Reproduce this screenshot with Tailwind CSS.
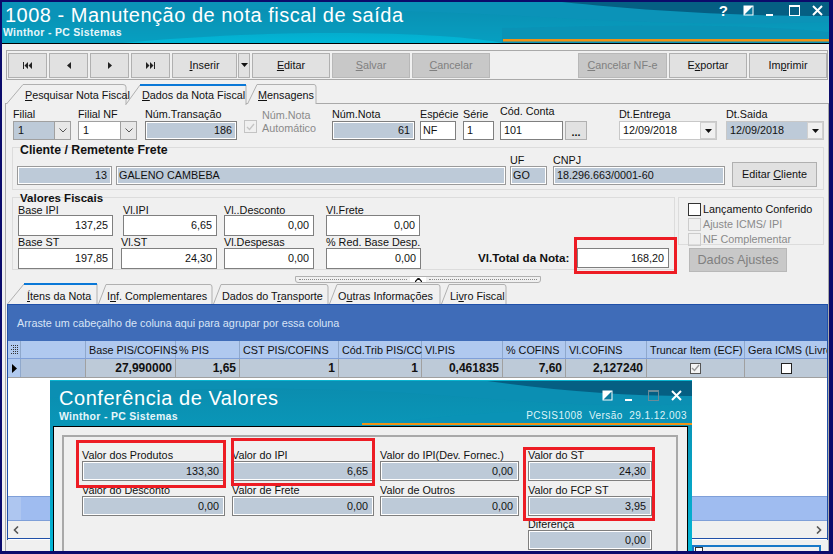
<!DOCTYPE html>
<html lang="en">
<head>
<meta charset="UTF-8">
<title>1008 - Manutenção de nota fiscal de saída</title>
<script src="https://cdn.jsdelivr.net/npm/@tailwindcss/browser@4"></script>
</head>
<body class="m-0">
<div class="relative w-[833px] h-[554px] overflow-hidden bg-[#0b0b6b] pt-[2px] pl-[2px] pr-[4px] font-['Liberation_Sans',sans-serif] text-[10.800px] leading-[13px] text-[#111]">

  <!-- main title bar -->
  <div class="relative h-[41px] bg-gradient-to-b from-[#0b8bad] to-[#01b8d8] overflow-hidden">
    <svg class="absolute inset-0" width="827" height="41" viewBox="0 0 827 41">
      <path d="M0 0H827V41H500C460 32 300 24 120 41H0Z" fill="#0a8fb3" opacity=".6"/>
      <path d="M0 18C150 6 330 4 520 14C620 20 720 24 827 20V0H0Z" fill="#0b93b8"/>
      <path d="M560 0C640 8 720 14 827 14V0Z" fill="#055f83"/>
      <path d="M500 41V26C600 24 720 20 827 30V41Z" fill="#0a93b6"/>
      <path d="M501 37H827V39.500H501Z" fill="#ef9215"/>
    </svg>
    <div class="relative pl-[3px] pt-[1px] text-[20px] leading-[24px] tracking-[0.5px] text-white">1008 - Manutenção de nota fiscal de saída</div>
    <div class="relative pl-[1px] font-bold text-[10.500px] leading-[10px] tracking-[0.3px] text-[#e6f6fa]">Winthor - PC Sistemas</div>
    <div class="absolute right-[6px] top-[3px] flex items-center text-white">
      <span class="font-bold text-[15px] leading-[11px]">?</span>
      <svg width="11" height="11" viewBox="0 0 11 11" class="ml-[15px]"><rect x=".5" y=".5" width="10" height="10" fill="#fff"/><path d="M9.500 1.500V9.500H1.500Z" fill="#0a7a9e"/></svg>
      <svg width="7" height="11" viewBox="0 0 7 11" class="ml-[12px]"><rect x="0" y="9" width="7" height="2" fill="#fff"/></svg>
      <svg width="11" height="11" viewBox="0 0 11 11" class="ml-[16px]"><rect x=".5" y="1" width="10" height="9.500" fill="none" stroke="#fff"/><rect x="0" y="0" width="11" height="2" fill="#fff"/></svg>
      <svg width="11" height="11" viewBox="0 0 11 11" class="ml-[12px]"><path d="M1 1L10 10M10 1L1 10" stroke="#fff" stroke-width="2"/></svg>
    </div>
  </div>
  <div class="h-[1px] bg-black"></div>

  <div class="relative h-[507px] overflow-hidden bg-[#f0f0f0]">
    <!-- toolbar -->
    <div class="mt-[6px]">
      <div class="ml-[4px] w-[822px] h-[30px] border border-[#a9a9a9] flex items-center pl-[1px]">
        <button class="w-[39px] h-[25px] flex items-center justify-center bg-[#e1e1e1] border border-[#b0b0b0]"><svg width="9" height="7" viewBox="0 0 9 7"><path d="M0 0H1V7H0ZM5 0V7L1.500 3.500ZM9 0V7L5.500 3.500Z" fill="#222"/></svg></button>
        <button class="ml-[2px] w-[39px] h-[25px] flex items-center justify-center bg-[#e1e1e1] border border-[#b0b0b0]"><svg width="4" height="7" viewBox="0 0 4 7"><path d="M4 0V7L0 3.500Z" fill="#222"/></svg></button>
        <button class="ml-[2px] w-[39px] h-[25px] flex items-center justify-center bg-[#e1e1e1] border border-[#b0b0b0]"><svg width="4" height="7" viewBox="0 0 4 7"><path d="M0 0V7L4 3.500Z" fill="#222"/></svg></button>
        <button class="ml-[2px] w-[39px] h-[25px] flex items-center justify-center bg-[#e1e1e1] border border-[#b0b0b0]"><svg width="9" height="7" viewBox="0 0 9 7"><path d="M0 0V7L3.500 3.500ZM4 0V7L7.500 3.500ZM8 0H9V7H8Z" fill="#222"/></svg></button>
        <button class="ml-[2px] w-[65px] h-[25px] bg-[#e1e1e1] border border-[#b0b0b0]"><u>I</u>nserir</button>
        <button class="ml-[1px] w-[12px] h-[25px] flex items-center justify-center bg-[#e1e1e1] border border-[#b0b0b0]"><svg width="7" height="4" viewBox="0 0 7 4"><path d="M0 0H7L3.500 4Z" fill="#111"/></svg></button>
        <button class="ml-[2px] w-[78px] h-[25px] bg-[#e1e1e1] border border-[#b0b0b0]"><u>E</u>ditar</button>
        <button class="ml-[2px] w-[78px] h-[25px] bg-[#c8c8c8] border border-[#b8b8b8] text-[#808080]"><u>S</u>alvar</button>
        <button class="ml-[2px] w-[78px] h-[25px] bg-[#c8c8c8] border border-[#b8b8b8] text-[#808080]"><u>C</u>ancelar</button>
        <button class="ml-[88px] w-[89px] h-[25px] bg-[#c8c8c8] border border-[#b8b8b8] text-[#808080]"><u>C</u>ancelar NF-e</button>
        <button class="ml-[2px] w-[78px] h-[25px] bg-[#e1e1e1] border border-[#b0b0b0]">E<u>x</u>portar</button>
        <button class="ml-[2px] w-[78px] h-[25px] bg-[#e1e1e1] border border-[#b0b0b0]">Im<u>p</u>rimir</button>
      </div>
    </div>

    <!-- page tabs -->
    <div class="mt-[4px] ml-[4px] h-[19px] flex whitespace-nowrap">
      <div class="relative w-[121px] h-[20px]">
        <svg class="absolute inset-0" width="121" height="20"><path d="M.5 20L17 .5H117Q120 .5 120 3V20" fill="#f0f0f0" stroke="#b0b0b0"/></svg>
        <div class="relative pl-[19px] pt-[5px]"><u>P</u>esquisar Nota Fiscal</div>
      </div>
      <div class="relative -ml-[2px] w-[122px] h-[21px] z-10">
        <svg class="absolute inset-0" width="122" height="21"><path d="M.5 21L15 1H121V21" fill="#f0f0f0" stroke="#b0b0b0"/><rect x="15" y="0" width="106" height="2" fill="#0a78d7"/></svg>
        <div class="relative pl-[17px] pt-[5px]"><u>D</u>ados da Nota Fiscal</div>
      </div>
      <div class="relative w-[70px] h-[20px]">
        <svg class="absolute inset-0" width="70" height="20"><path d="M.5 20L10 .5H67Q69 .5 69 3V20" fill="#f0f0f0" stroke="#b0b0b0"/></svg>
        <div class="relative pl-[11px] pt-[5px]"><u>M</u>ensagens</div>
      </div>
    </div>

    <!-- page panel -->
    <div class="ml-[3px] w-[824px] h-[449px] border border-[#a9a9a9] bg-[#f0f0f0]">
      <div class="flex pl-[7px] pt-[4px] h-[36px]">
        <div class="w-[58px]">
          <div class="h-[13px]">Filial</div>
          <div class="h-[19px] flex items-center bg-[#bdcad8] border border-[#a0a0a0] pl-[4px]"><span class="flex-1">1</span><span class="w-[16px] h-[17px] bg-[#e8e8e8] border-l border-[#a0a0a0] flex items-center justify-center"><svg width="8" height="5" viewBox="0 0 8 5"><path d="M.5.500L4 4L7.500.500" fill="none" stroke="#555"/></svg></span></div>
        </div>
        <div class="ml-[7px] w-[59px]">
          <div class="h-[13px]">Filial NF</div>
          <div class="h-[19px] flex items-center bg-white border border-[#a0a0a0] pl-[4px]"><span class="flex-1">1</span><span class="w-[16px] h-[17px] bg-[#e8e8e8] border-l border-[#a0a0a0] flex items-center justify-center"><svg width="8" height="5" viewBox="0 0 8 5"><path d="M.5.500L4 4L7.500.500" fill="none" stroke="#555"/></svg></span></div>
        </div>
        <div class="ml-[8px] w-[92px]">
          <div class="h-[13px]">Núm.Transação</div>
          <div class="h-[19px] flex items-center justify-end pr-[4px] bg-[#bdcad8] border border-[#7f7f7f] shadow-[inset_0_0_0_1px_#fff]">186</div>
        </div>
        <div class="ml-[7px] w-[88px] flex items-start pt-[1px]">
          <span class="mt-[11px] w-[13px] h-[13px] border border-[#c4c4c4] flex items-center justify-center shrink-0"><svg width="9" height="8" viewBox="0 0 9 8"><path d="M1 4L3.500 6.500L8 1" fill="none" stroke="#c4c4c4" stroke-width="1.300"/></svg></span>
          <span class="ml-[5px] text-[#8a8a8a]">Núm.Nota<br>Automático</span>
        </div>
        <div class="w-[83px]">
          <div class="h-[13px]">Núm.Nota</div>
          <div class="h-[19px] flex items-center justify-end pr-[4px] bg-[#bdcad8] border border-[#7f7f7f] shadow-[inset_0_0_0_1px_#fff]">61</div>
        </div>
        <div class="ml-[5px] w-[36px]">
          <div class="h-[13px] whitespace-nowrap">Espécie</div>
          <div class="h-[19px] flex items-center pl-[2px] bg-white border border-[#7f7f7f]">NF</div>
        </div>
        <div class="ml-[7px] w-[31px]">
          <div class="h-[13px]">Série</div>
          <div class="h-[19px] flex items-center pl-[3px] bg-white border border-[#7f7f7f]">1</div>
        </div>
        <div class="ml-[6px] w-[63px] -mt-[3px]">
          <div class="h-[16px] whitespace-nowrap">Cód. Conta</div>
          <div class="h-[19px] flex items-center pl-[3px] bg-white border border-[#7f7f7f]">101</div>
        </div>
        <button class="ml-[2px] mt-[13px] w-[22px] h-[19px] bg-[#e1e1e1] border border-[#b0b0b0] font-bold leading-[20px]">...</button>
        <div class="ml-[32px] w-[98px]">
          <div class="h-[13px]">Dt.Entrega</div>
          <div class="h-[19px] flex items-center bg-white border border-[#c8c8c8] pl-[3px]"><span class="flex-1">12/09/2018</span><span class="w-[16px] h-[17px] bg-[#f0f0f0] border border-[#d0d0d0] flex items-center justify-center"><svg width="7" height="4" viewBox="0 0 7 4"><path d="M0 0H7L3.500 4Z" fill="#111"/></svg></span></div>
        </div>
        <div class="ml-[9px] w-[98px]">
          <div class="h-[13px]">Dt.Saida</div>
          <div class="h-[19px] flex items-center bg-white border border-[#c8c8c8]"><span class="flex-1 h-[17px] pl-[3px] bg-[#bdcad8] leading-[17px]">12/09/2018</span><span class="w-[16px] h-[17px] bg-[#f0f0f0] border border-[#d0d0d0] flex items-center justify-center"><svg width="7" height="4" viewBox="0 0 7 4"><path d="M0 0H7L3.500 4Z" fill="#111"/></svg></span></div>
        </div>
      </div>

      <!-- cliente -->
      <div class="ml-[6px] mt-[7px] w-[812px] h-[43px] border border-[#dcdcdc]">
        <div class="ml-[7px] -mt-[4px] h-[14px] font-bold text-[12.300px]">Cliente / Remetente Frete</div>
        <div class="-mt-[3px] ml-[4px] flex items-end">
          <div class="w-[95px] h-[19px] flex items-center justify-end pr-[4px] bg-[#bdcad8] border border-[#9a9a9a] shadow-[inset_0_0_0_1px_#fff]">13</div>
          <div class="ml-[4px] w-[390px] h-[19px] flex items-center pl-[2px] bg-[#bdcad8] border border-[#9a9a9a] shadow-[inset_0_0_0_1px_#fff]">GALENO CAMBEBA</div>
          <div class="ml-[4px] w-[37px]">
            <div class="h-[11px] leading-[11px]">UF</div>
            <div class="h-[19px] flex items-center pl-[2px] bg-[#bdcad8] border border-[#9a9a9a] shadow-[inset_0_0_0_1px_#fff]">GO</div>
          </div>
          <div class="ml-[6px] w-[172px]">
            <div class="h-[11px] leading-[11px]">CNPJ</div>
            <div class="h-[19px] flex items-center pl-[3px] bg-[#bdcad8] border border-[#9a9a9a] shadow-[inset_0_0_0_1px_#fff]">18.296.663/0001-60</div>
          </div>
          <button class="ml-[7px] -mb-[2px] w-[85px] h-[25px] bg-[#e1e1e1] border border-[#b0b0b0]">Editar <u>C</u>liente</button>
        </div>
      </div>

      <!-- valores fiscais + right side -->
      <div class="ml-[6px] mt-[7px] h-[75px] flex">
        <div class="w-[663px] h-[73px] border border-[#dcdcdc]">
          <div class="ml-[7px] -mt-[6px] h-[13px] font-bold text-[11.500px]">Valores Fiscais</div>
          <div class="ml-[5px] flex h-[31px]">
            <div class="w-[95px]"><div class="h-[10px] leading-[10px]">Base IPI</div><div class="h-[21px] flex items-center justify-end pr-[4px] bg-white border border-[#7f7f7f]">137,25</div></div>
            <div class="ml-[10px] w-[94px]"><div class="h-[10px] leading-[10px]">Vl.IPI</div><div class="h-[21px] flex items-center justify-end pr-[4px] bg-white border border-[#7f7f7f]">6,65</div></div>
            <div class="ml-[7px] w-[90px]"><div class="h-[10px] leading-[10px]">Vl..Desconto</div><div class="h-[21px] flex items-center justify-end pr-[4px] bg-white border border-[#7f7f7f]">0,00</div></div>
            <div class="ml-[12px] w-[94px]"><div class="h-[10px] leading-[10px]">Vl.Frete</div><div class="h-[21px] flex items-center justify-end pr-[4px] bg-white border border-[#7f7f7f]">0,00</div></div>
          </div>
          <div class="ml-[5px] mt-[1px] flex">
            <div class="w-[95px]"><div class="h-[11px] leading-[11px]">Base ST</div><div class="h-[21px] flex items-center justify-end pr-[4px] bg-white border border-[#7f7f7f]">197,85</div></div>
            <div class="ml-[8px] w-[96px]"><div class="h-[11px] leading-[11px]">Vl.ST</div><div class="h-[21px] flex items-center justify-end pr-[4px] bg-white border border-[#7f7f7f]">24,30</div></div>
            <div class="ml-[7px] w-[90px]"><div class="h-[11px] leading-[11px]">Vl.Despesas</div><div class="h-[21px] flex items-center justify-end pr-[4px] bg-white border border-[#7f7f7f]">0,00</div></div>
            <div class="ml-[12px] w-[95px]"><div class="h-[11px] leading-[11px] whitespace-nowrap">% Red. Base Desp.</div><div class="h-[21px] flex items-center justify-end pr-[4px] bg-white border border-[#7f7f7f]">0,00</div></div>
            <div class="ml-[57px] self-end mb-[1px] h-[20px] leading-[20px] font-bold text-[11.700px] whitespace-nowrap w-[99px]">Vl.Total da Nota:</div>
            <div class="self-end mb-[1px] w-[92px] h-[20px] flex items-center justify-end pr-[4px] bg-white border border-[#7f7f7f]">168,20</div>
          </div>
        </div>
        <div class="ml-[3px] w-[146px]">
          <div class="h-[48px] border border-[#dcdcdc] pl-[9px] pt-[4px]">
            <div class="flex items-center h-[15px]"><span class="w-[13px] h-[13px] bg-white border border-[#333]"></span><span class="ml-[2px] whitespace-nowrap">Lançamento Conferido</span></div>
            <div class="flex items-center h-[15px] text-[#8a8a8a]"><span class="w-[13px] h-[13px] border border-[#ccc]"></span><span class="ml-[2px] whitespace-nowrap">Ajuste ICMS/ IPI</span></div>
            <div class="flex items-center h-[15px] text-[#8a8a8a]"><span class="w-[13px] h-[13px] border border-[#ccc]"></span><span class="ml-[2px] whitespace-nowrap">NF Complementar</span></div>
          </div>
          <button class="ml-[11px] mt-[3px] w-[98px] h-[24px] bg-[#c8c8c8] border border-[#b8b8b8] text-[#808080] text-[12.700px]">Dados Ajustes</button>
        </div>
      </div>

      <!-- splitter -->
      <div class="ml-[289px] mt-[4px] w-[246px] h-[7px] flex items-center bg-[#f0f0f0] border border-[#b0b0b0] rounded-b-[3px]">
        <span class="flex-1 h-[1px] border-t border-dotted border-[#888] mx-[3px]"></span>
        <span class="w-[16px] h-[5px] bg-white flex items-center justify-center"><svg width="7" height="4" viewBox="0 0 7 4"><path d="M0 4L3.500 0L7 4" fill="none" stroke="#111" stroke-width="1.200"/></svg></span>
        <span class="flex-1 h-[1px] border-t border-dotted border-[#888] mx-[3px]"></span>
      </div>

      <!-- detail tabs -->
      <div class="ml-[1px] h-[21px] flex whitespace-nowrap">
        <div class="relative w-[91px] h-[21px] z-10">
          <svg class="absolute inset-0" width="91" height="21"><path d="M.5 21L17 1H90V21" fill="#f0f0f0" stroke="#b0b0b0"/><rect x="17" y="0" width="73" height="2" fill="#0a78d7"/></svg>
          <div class="relative pl-[20px] pt-[7px]"><u>Í</u>tens da Nota</div>
        </div>
        <div class="relative w-[115px] h-[20px] mt-[1px]">
          <svg class="absolute inset-0" width="115" height="20"><path d="M.5 20L8 .5H112Q114 .5 114 3V20" fill="#f0f0f0" stroke="#b0b0b0"/></svg>
          <div class="relative pl-[9px] pt-[6px]">I<u>n</u>f. Complementares</div>
        </div>
        <div class="relative w-[116px] h-[20px] mt-[1px]">
          <svg class="absolute inset-0" width="116" height="20"><path d="M.5 20L8 .5H113Q115 .5 115 3V20" fill="#f0f0f0" stroke="#b0b0b0"/></svg>
          <div class="relative pl-[9px] pt-[6px]">Dados do T<u>r</u>ansporte</div>
        </div>
        <div class="relative w-[112px] h-[20px] mt-[1px]">
          <svg class="absolute inset-0" width="112" height="20"><path d="M.5 20L8 .5H109Q111 .5 111 3V20" fill="#f0f0f0" stroke="#b0b0b0"/></svg>
          <div class="relative pl-[9px] pt-[6px]">O<u>u</u>tras Informações</div>
        </div>
        <div class="relative w-[66px] h-[20px] mt-[1px]">
          <svg class="absolute inset-0" width="66" height="20"><path d="M.5 20L8 .5H63Q65 .5 65 3V20" fill="#f0f0f0" stroke="#b0b0b0"/></svg>
          <div class="relative pl-[9px] pt-[6px]">Li<u>v</u>ro Fiscal</div>
        </div>
      </div>

      <!-- grid -->
      <div class="ml-[1px] w-[821px] h-[236px] border-x border-t border-[#2050a8] bg-white overflow-hidden">
        <div class="h-[36px] bg-[#3f6cb8] pl-[9px] pt-[12px] text-[#d8e4f6]">Arraste um cabeçalho de coluna aqui para agrupar por essa coluna</div>
        <div class="h-[18px] flex items-center bg-[#b0c9ef] border-b border-[#7f9fd8] whitespace-nowrap overflow-hidden">
          <span class="shrink-0 w-[13px] h-full border-r border-[#8fa8cc] flex items-center justify-center"><svg width="7" height="9" viewBox="0 0 7 9"><path d="M0 .500H7M2 2.500H7M0 4.500H7M2 6.500H7M0 8.500H7" stroke="#333" stroke-dasharray="1 1"/></svg></span>
          <span class="shrink-0 w-[65px] h-full border-r border-[#8fa8cc]"></span>
          <span class="shrink-0 w-[90px] h-full leading-[18px] pl-[3px] border-r border-[#8fa8cc]">Base PIS/COFINS</span>
          <span class="shrink-0 w-[64px] h-full leading-[18px] pl-[3px] border-r border-[#8fa8cc]">% PIS</span>
          <span class="shrink-0 w-[99px] h-full leading-[18px] pl-[3px] border-r border-[#8fa8cc]">CST PIS/COFINS</span>
          <span class="shrink-0 w-[83px] h-full leading-[18px] pl-[3px] border-r border-[#8fa8cc]">Cód.Trib PIS/CC</span>
          <span class="shrink-0 w-[81px] h-full leading-[18px] pl-[3px] border-r border-[#8fa8cc]">Vl.PIS</span>
          <span class="shrink-0 w-[63px] h-full leading-[18px] pl-[3px] border-r border-[#8fa8cc]">% COFINS</span>
          <span class="shrink-0 w-[81px] h-full leading-[18px] pl-[3px] border-r border-[#8fa8cc]">Vl.COFINS</span>
          <span class="shrink-0 w-[98px] h-full leading-[18px] pl-[3px] border-r border-[#8fa8cc]">Truncar Item (ECF)</span>
          <span class="flex-1 h-full leading-[18px] pl-[3px]">Gera ICMS (Livro</span>
        </div>
        <div class="h-[19px] flex bg-[#bdcad8] border-b border-[#a0a0a0] font-bold text-[12px] text-right leading-[18px] whitespace-nowrap">
          <span class="w-[13px] h-full bg-[#b0c9ef] border-r border-[#8fa8cc] flex items-center justify-center"><svg width="5" height="9" viewBox="0 0 5 9"><path d="M0 0V9L5 4.500Z" fill="#000"/></svg></span>
          <span class="w-[65px] border-r border-[#a0a0a0] bg-[#b0c2da]"></span>
          <span class="w-[90px] pr-[3px] border-r border-[#a0a0a0]">27,990000</span>
          <span class="w-[64px] pr-[3px] border-r border-[#a0a0a0]">1,65</span>
          <span class="w-[99px] pr-[3px] border-r border-[#a0a0a0]">1</span>
          <span class="w-[83px] pr-[3px] border-r border-[#a0a0a0]">1</span>
          <span class="w-[81px] pr-[3px] border-r border-[#a0a0a0]">0,461835</span>
          <span class="w-[63px] pr-[3px] border-r border-[#a0a0a0]">7,60</span>
          <span class="w-[81px] pr-[3px] border-r border-[#a0a0a0]">2,127240</span>
          <span class="w-[98px] border-r border-[#a0a0a0] flex items-center justify-center"><span class="w-[11px] h-[11px] bg-[#f4f4f4] border border-[#555] flex items-center justify-center"><svg width="9" height="8" viewBox="0 0 9 8"><path d="M1 4L3.500 6.500L8 1" fill="none" stroke="#999" stroke-width="1.400"/></svg></span></span>
          <span class="flex-1 flex items-center justify-center"><span class="w-[11px] h-[11px] bg-white border border-[#222]"></span></span>
        </div>
        <div class="h-[118px] bg-white"></div>
        <div class="h-[25px] bg-[#9fbcf0] border-y border-[#7f9fd8]"><div class="w-[13px] h-full bg-[#aec6f0]"></div></div>
        <div class="h-[18px] flex items-center justify-between px-[5px] bg-[#f0f0f0] border-b border-[#2050a8]">
          <svg width="6" height="8" viewBox="0 0 6 8"><path d="M5 .500L1.500 4L5 7.500" fill="none" stroke="#555" stroke-width="1.600"/></svg>
          <svg width="6" height="8" viewBox="0 0 6 8"><path d="M1 .500L4.500 4L1 7.500" fill="none" stroke="#555" stroke-width="1.600"/></svg>
        </div>
      </div>
    </div>

    <!-- small box peeking out at the bottom right -->
    <div class="absolute left-[690px] top-[501px] w-[129px] h-[8px] border-x-2 border-t-2 border-[#1878c8] pl-[1px]"><span class="block w-[8px] h-[6px] border border-[#333] bg-white"></span></div>

    <!-- Conferência de Valores window -->
    <div class="absolute left-[48px] top-[336px] w-[642px] h-[180px] bg-gradient-to-b from-[#0b8bad] to-[#01b8d8]">
      <svg class="absolute inset-0" width="642" height="48" viewBox="0 0 642 48">
        <path d="M0 18C130 6 270 6 400 16C480 22 560 28 642 24V0H0Z" fill="#0b8fb3"/>
        <path d="M430 0C500 10 570 16 642 16V0Z" fill="#055f83"/>
        <path d="M300 48C420 30 540 26 642 34V48Z" fill="#0a93b6"/>
        <rect x="312" y="43" width="330" height="2" fill="#ef9215"/>
        <rect x="0" y="0" width="642" height="1" fill="#0ab4cf"/>
      </svg>
      <div class="relative pl-[9px] pt-[6px] h-[30px] text-[20px] leading-[24px] tracking-[0.55px] text-white">Conferência de Valores</div>
      <div class="relative flex justify-between pl-[9px] pr-[5px] h-[17px]">
        <span class="font-bold text-[10.500px] leading-[12px] tracking-[0.3px] text-[#e6f6fa]">Winthor - PC Sistemas</span>
        <span class="text-[10px] leading-[12px] tracking-[0.45px] text-[#dff3f8]">PCSIS1008&nbsp; Versão&nbsp; 29.1.12.003</span>
      </div>
      <div class="absolute right-[10px] top-[10px] flex items-center">
        <svg width="11" height="11" viewBox="0 0 11 11"><rect x=".5" y=".5" width="10" height="10" fill="#fff"/><path d="M9.500 1.500V9.500H1.500Z" fill="#0a7a9e"/></svg>
        <svg width="7" height="11" viewBox="0 0 7 11" class="ml-[12px]"><rect x="0" y="9" width="7" height="2" fill="#fff"/></svg>
        <svg width="11" height="11" viewBox="0 0 11 11" class="ml-[16px]"><rect x=".5" y="1" width="10" height="9.500" fill="none" stroke="#6b8b98"/><rect x="0" y="0" width="11" height="2" fill="#6b8b98"/></svg>
        <svg width="11" height="11" viewBox="0 0 11 11" class="ml-[12px]"><path d="M1 1L10 10M10 1L1 10" stroke="#fff" stroke-width="2"/></svg>
      </div>

      <div class="relative ml-[3px] -mt-[1px] w-[635px] h-[130px] border border-black bg-[#f0f0f0] pt-[8px] pl-[8px]">
        <div class="w-[616px] h-[120px] border-t-2 border-x-2 border-[#a9a9a9] pt-[12px]">
          <div class="flex ml-[18px]">
            <div class="w-[143px]">
              <div class="h-[12px] leading-[12px]">Valor dos Produtos</div>
              <div class="h-[20px] flex items-center justify-end pr-[5px] bg-[#bdcad8] border border-[#7f7f7f] shadow-[inset_0_0_0_1px_#fff]">133,30</div>
              <div class="mt-[3px] h-[12px] leading-[12px]">Valor do Desconto</div>
              <div class="h-[20px] flex items-center justify-end pr-[5px] bg-[#bdcad8] border border-[#7f7f7f] shadow-[inset_0_0_0_1px_#fff]">0,00</div>
            </div>
            <div class="ml-[7px] w-[142px]">
              <div class="h-[12px] leading-[12px]">Valor do IPI</div>
              <div class="h-[20px] flex items-center justify-end pr-[5px] bg-[#bdcad8] border border-[#7f7f7f] shadow-[inset_0_0_0_1px_#fff]">6,65</div>
              <div class="mt-[3px] h-[12px] leading-[12px]">Valor de Frete</div>
              <div class="h-[20px] flex items-center justify-end pr-[5px] bg-[#bdcad8] border border-[#7f7f7f] shadow-[inset_0_0_0_1px_#fff]">0,00</div>
            </div>
            <div class="ml-[6px] w-[139px]">
              <div class="h-[12px] leading-[12px]">Valor do IPI(Dev. Fornec.)</div>
              <div class="h-[20px] flex items-center justify-end pr-[5px] bg-[#bdcad8] border border-[#7f7f7f] shadow-[inset_0_0_0_1px_#fff]">0,00</div>
              <div class="mt-[3px] h-[12px] leading-[12px]">Valor de Outros</div>
              <div class="h-[20px] flex items-center justify-end pr-[5px] bg-[#bdcad8] border border-[#7f7f7f] shadow-[inset_0_0_0_1px_#fff]">0,00</div>
            </div>
            <div class="ml-[9px] w-[124px]">
              <div class="h-[12px] leading-[12px]">Valor do ST</div>
              <div class="h-[20px] flex items-center justify-end pr-[5px] bg-[#bdcad8] border border-[#7f7f7f] shadow-[inset_0_0_0_1px_#fff]">24,30</div>
              <div class="mt-[3px] h-[12px] leading-[12px]">Valor do FCP ST</div>
              <div class="h-[20px] flex items-center justify-end pr-[5px] bg-[#bdcad8] border border-[#7f7f7f] shadow-[inset_0_0_0_1px_#fff]">3,95</div>
              <div class="mt-[2px] h-[12px] leading-[12px]">Diferença</div>
              <div class="h-[20px] flex items-center justify-end pr-[5px] bg-[#bdcad8] border border-[#7f7f7f] shadow-[inset_0_0_0_1px_#fff]">0,00</div>
            </div>
          </div>
        </div>
      </div>
    </div>

    <!-- red highlight boxes, drawn on top of the screenshot -->
    <div class="absolute left-[572px] top-[193px] w-[103px] h-[37px] border-[3px] border-[#ed1c24]"></div>
    <div class="absolute left-[74px] top-[396px] w-[150px] h-[48px] border-[3px] border-[#ed1c24]"></div>
    <div class="absolute left-[229px] top-[394px] w-[144px] h-[48px] border-[3px] border-[#ed1c24]"></div>
    <div class="absolute left-[521px] top-[403px] w-[132px] h-[74px] border-[3px] border-[#ed1c24]"></div>
  </div>
</div>
</body>
</html>
